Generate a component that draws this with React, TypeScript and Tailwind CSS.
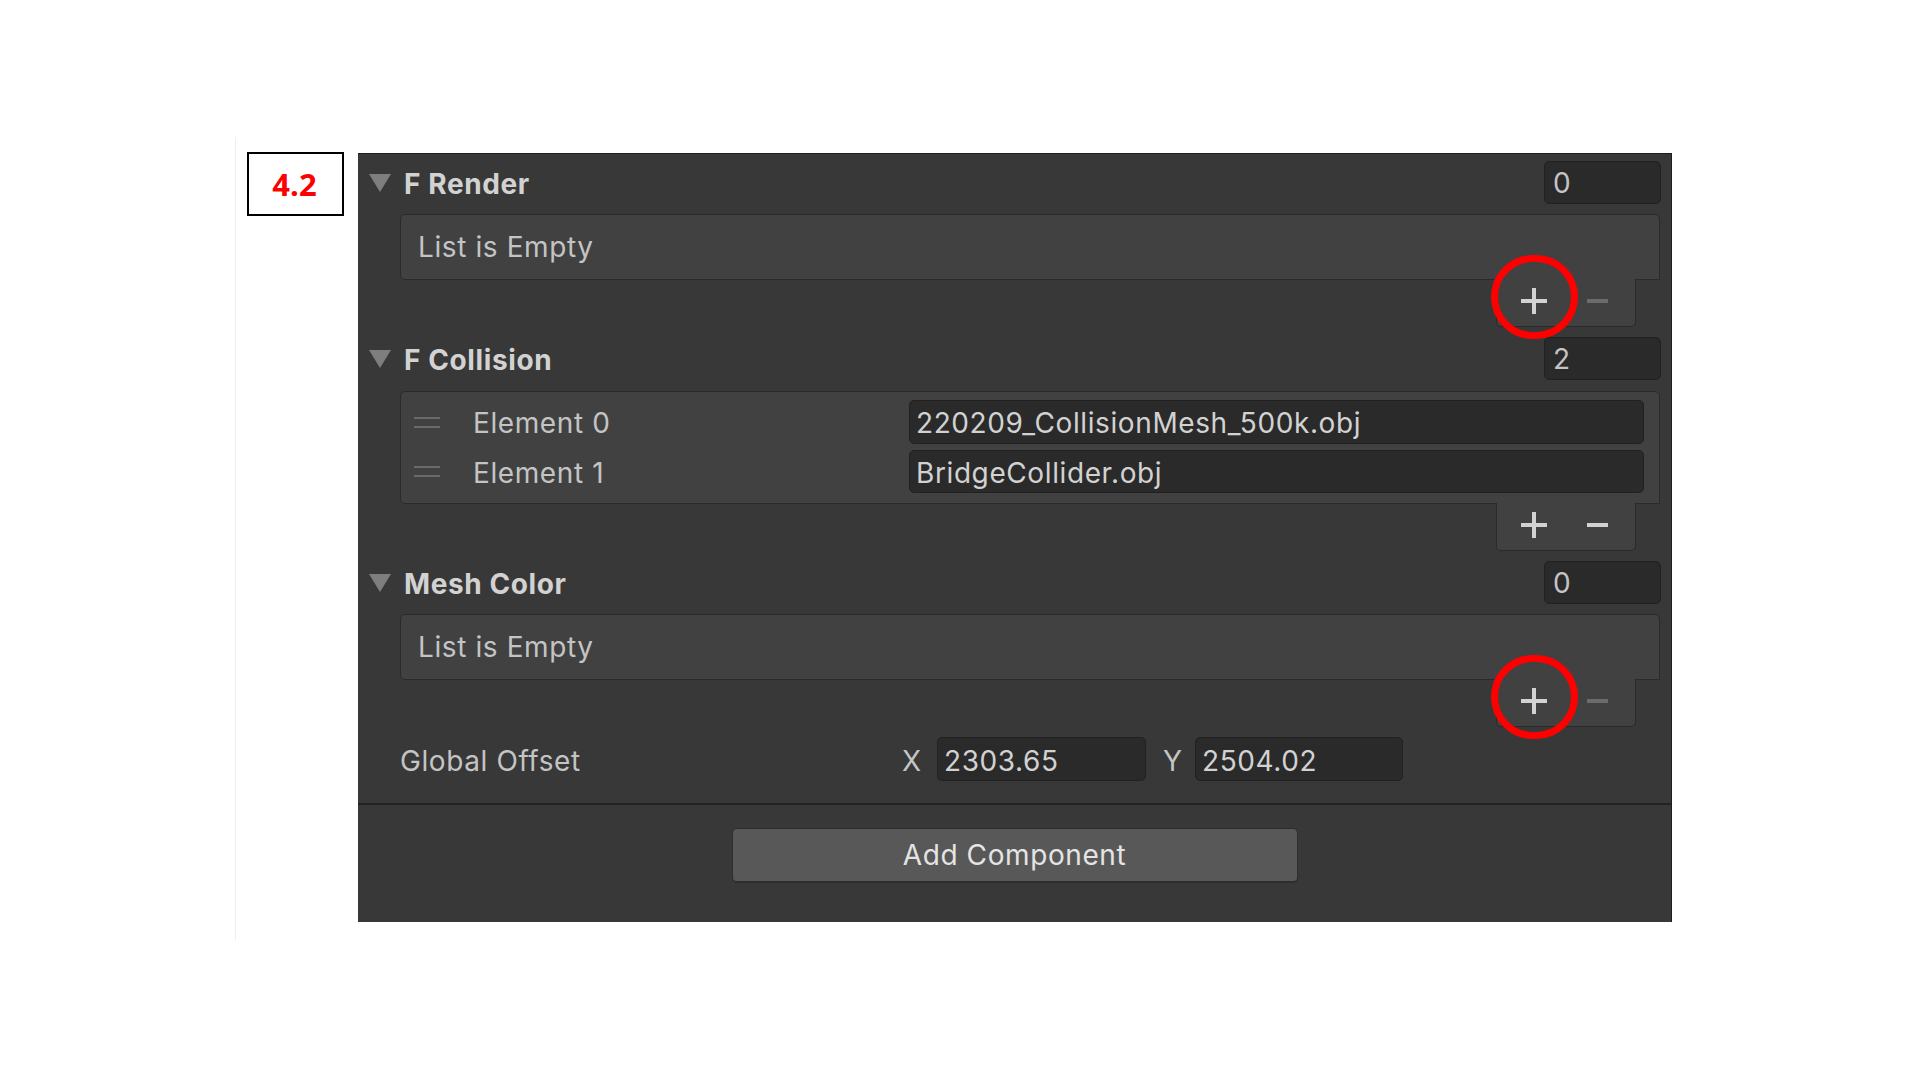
import React from "react";

const FONT = "font-['Inter','Noto_Sans',sans-serif] tracking-[0.6px]";

function Triangle() {
  return (
    <svg width="22" height="18" viewBox="0 0 22 18" className="shrink-0">
      <polygon points="0,0 22,0 11,18" fill="#7e7e7e" />
    </svg>
  );
}

function Plus() {
  return (
    <svg width="26" height="26" viewBox="0 0 26 26" className="shrink-0">
      <rect x="0" y="11" width="26" height="4" fill="#d2d2d2" />
      <rect x="11" y="0" width="4" height="26" fill="#d2d2d2" />
    </svg>
  );
}

function Minus({ active }: { active: boolean }) {
  return (
    <svg width="21" height="4" viewBox="0 0 21 4" className="shrink-0">
      <rect x="0" y="0" width="21" height="4" fill={active ? "#d2d2d2" : "#6c6c6c"} />
    </svg>
  );
}

function Handle() {
  return (
    <div className="flex w-[26px] shrink-0 flex-col gap-[7px]">
      <div className="h-[2px] bg-[#6a6a6a]" />
      <div className="h-[2px] bg-[#6a6a6a]" />
    </div>
  );
}

function ListFooter({ active, circled }: { active: boolean; circled?: boolean }) {
  return (
    <div className="relative -mt-px mr-[24px] flex h-[48px] w-[140px] items-center self-end rounded-b-[5px] border-x border-b border-[#2a2a2a] bg-[#414141] pb-[3px] pl-[24px]">
      <Plus />
      <div className="ml-[40px]">
        <Minus active={active} />
      </div>
      {circled && (
        <div className="absolute left-[-6px] top-[-24px] h-[84px] w-[87px] rounded-full border-[7px] border-[#ff0000]" />
      )}
    </div>
  );
}

function Header({ title, count }: { title: string; count: string }) {
  return (
    <div className="flex h-[43px] items-center">
      <Triangle />
      <span className="ml-[13px] flex-1 pt-[2px] text-[28px] font-bold text-[#d2d2d2]">{title}</span>
      <div className="-mr-px flex h-[43px] w-[117px] items-center rounded-[5px] border border-[#212121] bg-[#2a2a2a] pl-[8px] text-[28px] text-[#c4c4c4]">
        {count}
      </div>
    </div>
  );
}

function EmptyList({ title, circled }: { title: string; circled?: boolean }) {
  return (
    <div className="flex flex-col">
      <Header title={title} count="0" />
      <div className="ml-[31px] mt-[10px] flex h-[66px] items-center rounded-t-[5px] rounded-bl-[5px] border border-[#2a2a2a] bg-[#414141] pl-[17px] text-[28px] text-[#c4c4c4]">
        List is Empty
      </div>
      <ListFooter active={false} circled={circled} />
    </div>
  );
}

const elements = [
  { label: "Element 0", value: "220209_CollisionMesh_500k.obj" },
  { label: "Element 1", value: "BridgeCollider.obj" },
];

function CollisionList() {
  return (
    <div className="flex flex-col">
      <Header title="F Collision" count="2" />
      <div className="ml-[31px] mt-[11px] flex flex-col gap-[6px] rounded-t-[5px] rounded-bl-[5px] border border-[#2a2a2a] bg-[#414141] pb-[10px] pt-[8px]">
        {elements.map((el, i) => (
          <div key={el.label} className={`flex items-center pl-[13px] pr-[15px] ${i === 0 ? "h-[44px]" : "h-[43px]"}`}>
            <Handle />
            <span className="ml-[33px] w-[436px] shrink-0 pt-[2px] text-[28px] text-[#c4c4c4]">{el.label}</span>
            <div className="flex h-full flex-1 items-center rounded-[5px] border border-[#212121] bg-[#2a2a2a] pl-[6px] pt-[2px] text-[28px] text-[#d2d2d2]">
              {el.value}
            </div>
          </div>
        ))}
      </div>
      <ListFooter active={true} />
    </div>
  );
}

function GlobalOffset() {
  return (
    <div className="ml-[31px] mt-[10px] flex h-[44px] items-center text-[28px] text-[#c4c4c4]">
      <span className="w-[502px] shrink-0 pt-[3px]">Global Offset</span>
      <span className="w-[35px] shrink-0 pt-[3px]">X</span>
      <div className="flex h-full w-[209px] items-center rounded-[5px] border border-[#212121] bg-[#2a2a2a] pl-[6px] pt-[3px] text-[#d2d2d2]">
        2303.65
      </div>
      <span className="w-[49px] shrink-0 pl-[17px] pt-[3px]">Y</span>
      <div className="flex h-full w-[208px] items-center rounded-[5px] border border-[#212121] bg-[#2a2a2a] pl-[6px] pt-[3px] text-[#d2d2d2]">
        2504.02
      </div>
    </div>
  );
}

export default function App() {
  return (
    <div className={`h-[1080px] w-full bg-white pl-[235px] pt-[137px] ${FONT}`}>
      <div className="flex h-[803px] items-start border-l border-[#eeeeee] pl-[11px]">
        <div className="mt-[15px] flex h-[64px] w-[97px] shrink-0 items-center justify-center border-2 border-black pr-[2px] font-['Open_Sans',sans-serif] text-[31px] font-bold tracking-normal text-[#ff0000]">
          4.2
        </div>
        <div className="ml-[14px] mt-[16px] flex h-[769px] w-[1314px] shrink-0 flex-col border-r border-t border-[#1e1e1e] bg-[#383838]">
          <div className="flex flex-col px-[11px] pb-[22px] pt-[7px]">
            <EmptyList title="F Render" circled />
            <div className="pt-[10px]">
              <CollisionList />
            </div>
            <div className="pt-[10px]">
              <EmptyList title="Mesh Color" circled />
            </div>
            <GlobalOffset />
          </div>
          <div className="h-[2px] bg-[#222222]" />
          <div className="flex justify-center pt-[23px]">
            <div className="flex h-[55px] w-[566px] items-center justify-center rounded-[5px] border border-b-2 border-[#2e2e2e] bg-[#585858] text-[28px] text-[#e4e4e4]">
              Add Component
            </div>
          </div>
        </div>
      </div>
    </div>
  );
}
